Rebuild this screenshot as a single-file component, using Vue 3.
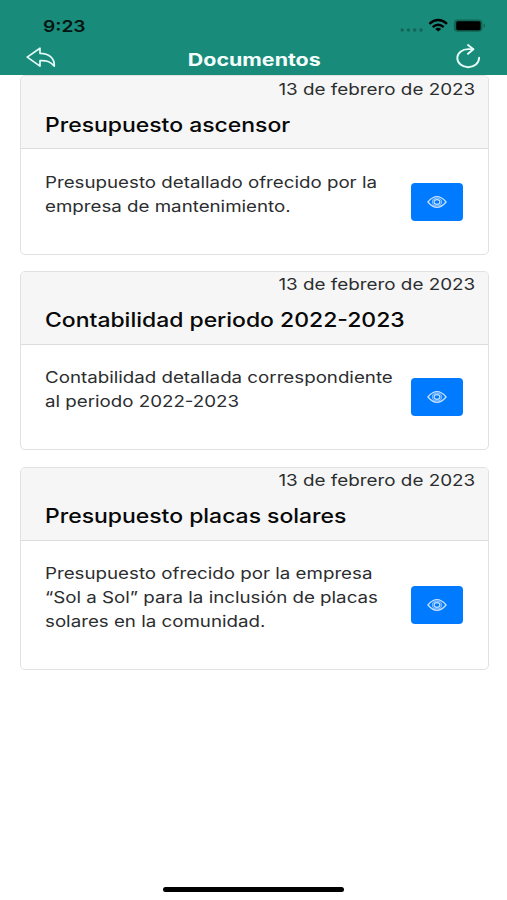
<script setup>
const documents = [
  {
    date: '13 de febrero de 2023',
    title: 'Presupuesto ascensor',
    lines: ['Presupuesto detallado ofrecido por la', 'empresa de mantenimiento.'],
  },
  {
    date: '13 de febrero de 2023',
    title: 'Contabilidad periodo 2022-2023',
    lines: ['Contabilidad detallada correspondiente', 'al periodo 2022-2023'],
  },
  {
    date: '13 de febrero de 2023',
    title: 'Presupuesto placas solares',
    lines: ['Presupuesto ofrecido por la empresa', '“Sol a Sol” para la inclusión de placas', 'solares en la comunidad.'],
  },
]
</script>

<template>
  <div class="screen">
    <header class="top">
      <div class="status">
        <span class="time">9:23</span>
        <svg class="signals" width="90" height="16" viewBox="0 0 90 16">
          <g fill="#116756">
            <circle cx="5.2" cy="12" r="1.7" /><circle cx="11.4" cy="12" r="1.7" />
            <circle cx="17.7" cy="12" r="1.7" /><circle cx="24" cy="12" r="1.7" />
          </g>
          <g fill="none" stroke="#000" stroke-width="2.4">
            <path d="M32.4 5.9Q41.2-1.7 50 5.9" />
            <path d="M35.7 9.2Q41.2 4.4 46.7 9.2" />
          </g>
          <path d="M38.2 11Q41.2 8.7 44.2 11L41.2 13.6Z" />
          <rect x="56.9" y="1.4" width="28.6" height="12.4" rx="3.8" fill="#116756" />
          <rect x="59.2" y="3.2" width="24.4" height="9" rx="1.6" />
          <path d="M86.6 5.6Q90 7.7 86.6 9.8Z" fill="#116756" />
        </svg>
      </div>
      <div class="nav">
        <svg class="back" width="30" height="22" viewBox="0 0 30 22" fill="none" stroke="#e4fbf6" stroke-width="1.7" stroke-linejoin="round">
          <path d="M1.2 10.1L14 1.2V6.3C22.5 6.1 28.8 11.2 28.3 19.2C24.5 14.2 20.5 13.5 14 13.7V19.1Z" />
        </svg>
        <h1>Documentos</h1>
        <svg class="reload" width="26" height="26" viewBox="0 0 26 26" fill="none" stroke="#e4fbf6" stroke-width="1.9" stroke-linecap="round" stroke-linejoin="round">
          <path d="M18.2 5.1H13.2C7.2 5.1 2.3 9 2.3 14C2.3 19.1 7.2 23.2 13.2 23.2C19.2 23.2 24.1 19.1 24.1 13.7" />
          <path d="M13 1L18.4 5.2L13 9.8" />
        </svg>
      </div>
    </header>
    <main class="list">
      <article v-for="doc in documents" :key="doc.title" class="card">
        <div class="head">
          <div class="date"><span>{{ doc.date }}</span></div>
          <h2><span>{{ doc.title }}</span></h2>
        </div>
        <div class="body">
          <p><span v-for="line in doc.lines" :key="line">{{ line }}</span></p>
          <button type="button" aria-label="Ver documento">
            <svg width="20" height="14" viewBox="0 0 20 14" fill="none" stroke="#c4e0ff" stroke-width="1.2">
              <path d="M.9 7Q10-3.6 19.1 7Q10 17.6 .9 7Z" />
              <ellipse cx="10" cy="7" rx="4.6" ry="3.8" stroke-opacity=".65" />
              <ellipse cx="10" cy="7" rx="2.9" ry="2.4" />
            </svg>
          </button>
        </div>
      </article>
    </main>
    <footer><div class="home"></div></footer>
  </div>
</template>

<style>
body { margin: 0; background: #fff; }
</style>

<style scoped>
* { box-sizing: border-box; }
.screen { width: 507px; height: 900px; display: flex; flex-direction: column; background: #fff; font-family: Inter, "Liberation Sans", sans-serif; color: #2b2d2f; overflow: hidden; }
.top { height: 75px; flex: none; background: #198b7a; }
.status { height: 42px; padding: 16px 20px 0 43px; display: flex; justify-content: space-between; }
.time { font-size: 16px; line-height: 20px; font-weight: 600; color: #031512; transform: scaleX(1.2); transform-origin: left; }
.signals { margin-top: 2px; }
.nav { height: 33px; padding: 0 26px 0 26px; display: flex; justify-content: space-between; align-items: flex-start; }
.back { margin-top: 5px; }
.reload { margin-top: 2px; }
h1 { margin: 6px 0 0; font-size: 17px; line-height: 24px; font-weight: 700; color: #f4fffd; transform: translateX(-1.5px) scaleX(1.26); }
.list { flex: 1; padding: .3px 18.5px 0 19.5px; display: flex; flex-direction: column; gap: 16.2px; }
.card { border: 1px solid #e1e1e1; border-radius: 5px; overflow: hidden; background: #fff; }
.head { height: 73px; padding-top: .4px; background: #f6f6f6; border-bottom: 1px solid #dcdcdc; }
.date { height: 24px; padding-right: 12px; text-align: right; font-size: 16px; line-height: 24px; }
.date span { display: inline-block; transform: scaleX(1.177); transform-origin: right; }
h2 { margin: 12px 0 0; padding-left: 24px; font-size: 20px; line-height: 24px; font-weight: 500; color: #080808; }
h2 span { display: inline-block; transform: scaleX(1.147); transform-origin: left; }
.body { padding: 20.5px 24.5px 20px 24px; display: flex; justify-content: space-between; align-items: center; }
p { margin: 0 0 16px; font-size: 16px; line-height: 24px; display: flex; flex-direction: column; align-items: flex-start; white-space: nowrap; }
p span { transform: scaleX(1.17); transform-origin: left; }
button { width: 52px; height: 38px; border: 0; padding: 0; border-radius: 4px; background: #007bff; display: flex; align-items: center; justify-content: center; }
footer { height: 15px; flex: none; display: flex; justify-content: center; }
.home { width: 181px; height: 5px; margin-top: 2px; border-radius: 3px; background: #000; }
</style>
